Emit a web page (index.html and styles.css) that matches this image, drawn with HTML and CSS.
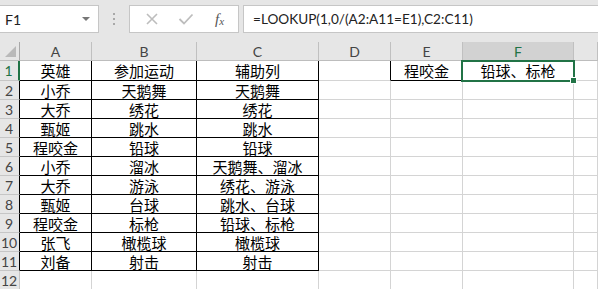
FILE: index.html
```html
<!DOCTYPE html>
<html>
<head>
<meta charset="utf-8">
<link rel="stylesheet" href="styles.css">
</head>
<body>
<div class="app">
  <div class="toolbar">
    <div class="namebox"><span class="name">F1</span><span class="caret"></span></div>
    <div class="dots"><i></i><i></i><i></i></div>
    <div class="fxbox">
      <svg class="ico" width="14" height="14" viewBox="0 0 14 14"><path d="M2 2 L12 12 M12 2 L2 12" stroke="#bdbdbd" stroke-width="1.6" fill="none"/></svg>
      <svg class="ico" width="16" height="14" viewBox="0 0 16 14"><path d="M1.5 7 L6 11.5 L14.5 2.5" stroke="#bdbdbd" stroke-width="1.8" fill="none"/></svg>
      <span class="fx">f<sub>x</sub></span>
    </div>
    <div class="formula">=LOOKUP(1,0/(A2:A11=E1),C2:C11)</div>
  </div>
  <div class="sheet">
    <div class="h corner"><span class="tri"></span></div>
    <div class="h">A</div><div class="h">B</div><div class="h">C</div><div class="h">D</div><div class="h">E</div><div class="h hs">F</div><div class="h"></div>

    <div class="r rs">1</div>
    <div class="c t">英雄</div><div class="c t">参加运动</div><div class="c t">辅助列</div><div class="c dl"></div><div class="c eb">程咬金</div>
    <div class="c sel">铅球、标枪<span class="frame"><span class="handle"></span></span></div><div class="c"></div>

    <div class="r">2</div><div class="c t">小乔</div><div class="c t">天鹅舞</div><div class="c t">天鹅舞</div><div class="c"></div><div class="c"></div><div class="c"></div><div class="c"></div>
    <div class="r">3</div><div class="c t">大乔</div><div class="c t">绣花</div><div class="c t">绣花</div><div class="c"></div><div class="c"></div><div class="c"></div><div class="c"></div>
    <div class="r">4</div><div class="c t">甄姬</div><div class="c t">跳水</div><div class="c t">跳水</div><div class="c"></div><div class="c"></div><div class="c"></div><div class="c"></div>
    <div class="r">5</div><div class="c t">程咬金</div><div class="c t">铅球</div><div class="c t">铅球</div><div class="c"></div><div class="c"></div><div class="c"></div><div class="c"></div>
    <div class="r">6</div><div class="c t">小乔</div><div class="c t">溜冰</div><div class="c t">天鹅舞、溜冰</div><div class="c"></div><div class="c"></div><div class="c"></div><div class="c"></div>
    <div class="r">7</div><div class="c t">大乔</div><div class="c t">游泳</div><div class="c t">绣花、游泳</div><div class="c"></div><div class="c"></div><div class="c"></div><div class="c"></div>
    <div class="r">8</div><div class="c t">甄姬</div><div class="c t">台球</div><div class="c t">跳水、台球</div><div class="c"></div><div class="c"></div><div class="c"></div><div class="c"></div>
    <div class="r">9</div><div class="c t">程咬金</div><div class="c t">标枪</div><div class="c t">铅球、标枪</div><div class="c"></div><div class="c"></div><div class="c"></div><div class="c"></div>
    <div class="r">10</div><div class="c t">张飞</div><div class="c t">橄榄球</div><div class="c t">橄榄球</div><div class="c"></div><div class="c"></div><div class="c"></div><div class="c"></div>
    <div class="r">11</div><div class="c t">刘备</div><div class="c t">射击</div><div class="c t">射击</div><div class="c"></div><div class="c"></div><div class="c"></div><div class="c"></div>
    <div class="r r12">12</div><div class="c"></div><div class="c"></div><div class="c"></div><div class="c"></div><div class="c"></div><div class="c"></div><div class="c"></div>
  </div>
</div>
</body>
</html>
```
FILE: styles.css
```css
* { box-sizing: border-box; }
html, body { margin: 0; padding: 0; }
body { width: 598px; height: 289px; overflow: hidden; background: #fff; }
.app { width: 598px; height: 289px; overflow: hidden; }

.toolbar {
  height: 42px;
  background: #e6e6e6;
  display: flex;
  align-items: flex-start;
  padding-top: 5px;
}
.namebox {
  margin-left: -1px;
  width: 100px;
  height: 28px;
  background: #fff;
  border: 1px solid #c6c6c6;
  display: flex;
  align-items: center;
  justify-content: space-between;
  padding: 0 8px 0 5px;
}
.name { font-family: "Lato", "Liberation Sans", sans-serif; font-size: 14px; color: #222; }
.caret { width: 0; height: 0; border-left: 4px solid transparent; border-right: 4px solid transparent; border-top: 4px solid #777; }
.dots { width: 30px; height: 28px; display: flex; flex-direction: column; align-items: center; justify-content: center; gap: 3px; }
.dots i { display: block; width: 2px; height: 2px; background: #a8a8a8; }
.fxbox {
  width: 110px;
  height: 28px;
  background: #fff;
  border: 1px solid #c6c6c6;
  display: flex;
  align-items: center;
  padding-left: 15px;
  gap: 19px;
}
.ico { display: block; }
.fx { font-family: "Liberation Serif", serif; font-style: italic; font-size: 15px; color: #555; margin-left: 2px; }
.fx sub { font-size: 11px; vertical-align: -1px; }
.formula {
  margin-left: 4px;
  flex: 1;
  height: 28px;
  background: #fff;
  border: 1px solid #c6c6c6;
  border-right: none;
  padding-left: 9px;
  line-height: 26px;
  font-family: "Lato", "Liberation Sans", sans-serif;
  font-size: 13.6px;
  color: #222;
}

.sheet {
  position: relative;
  display: grid;
  grid-template-columns: 20px 72px 105px 122px 72px 72px 111px 1fr;
  grid-template-rows: 19px 20px repeat(10, 19px) 19px;
}
.h {
  background: #e6e6e6;
  border-right: 1px solid #c0c0c0;
  border-bottom: 1px solid #bdbdbd;
  display: flex;
  align-items: center;
  justify-content: center;
  font-family: "Lato", "Liberation Sans", sans-serif;
  font-size: 14px;
  color: #444;
  padding-top: 1px;
}
.corner { position: relative; border-right-color: #a8a8a8; }
.tri { position: absolute; right: 3px; bottom: 3px; width: 0; height: 0; border-left: 11px solid transparent; border-bottom: 11px solid #b9b9b9; }
.hs { background: #d2d2d2; color: #217346; border-bottom-color: #217346; }
.r {
  background: #e6e6e6;
  border-right: 1px solid #000;
  border-bottom: 1px solid #c6c6c6;
  display: flex;
  align-items: center;
  justify-content: center;
  font-family: "Lato", "Liberation Sans", sans-serif;
  font-size: 14px;
  color: #444;
  padding-right: 1px;
}
.rs { color: #217346; border-right: 2px solid #217346; }
.r12 { border-right-color: #c6c6c6; }
.c {
  border-right: 1px solid #d4d4d4;
  border-bottom: 1px solid #d4d4d4;
  display: flex;
  align-items: center;
  justify-content: center;
  font-family: "Noto Sans CJK SC", sans-serif;
  font-size: 15px;
  color: #000;
  white-space: nowrap;
}
.t { border-right-color: #000; border-bottom-color: #000; }
.dl { border-right-color: #000; }
.eb { border-bottom-color: #000; }
.sel { position: relative; }
.frame {
  position: absolute;
  left: -2px; top: -1px; right: -2px; bottom: -2px;
  border: 2px solid #217346;
}
.handle {
  position: absolute;
  right: -4px; bottom: -4px;
  width: 7px; height: 7px;
  background: #217346;
  border: 1px solid #fff;
}
```
